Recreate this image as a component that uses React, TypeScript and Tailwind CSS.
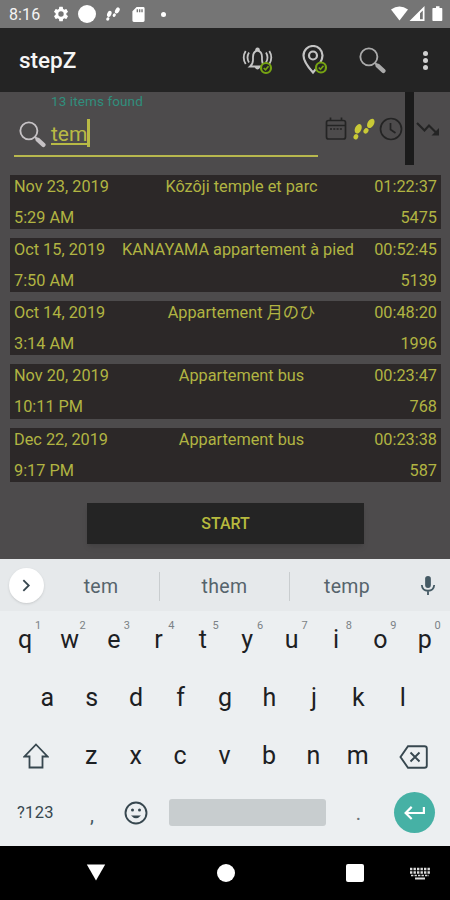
import { clsx } from "clsx";
import type { ReactNode } from "react";

type Walk = {
  date: string;
  time: string;
  title: string;
  duration: string;
  steps: number;
};

const WALKS: Walk[] = [
  { date: "Nov 23, 2019", time: "5:29 AM", title: "Kôzôji temple et parc", duration: "01:22:37", steps: 5475 },
  { date: "Oct 15, 2019", time: "7:50 AM", title: "KANAYAMA appartement à pied", duration: "00:52:45", steps: 5139 },
  { date: "Oct 14, 2019", time: "3:14 AM", title: "Appartement 月のひ", duration: "00:48:20", steps: 1996 },
  { date: "Nov 20, 2019", time: "10:11 PM", title: "Appartement bus", duration: "00:23:47", steps: 768 },
  { date: "Dec 22, 2019", time: "9:17 PM", title: "Appartement bus", duration: "00:23:38", steps: 587 },
];

const TOP_KEYS = "qwertyuiop".split("");
const MIDDLE_KEYS = "asdfghjkl".split("");
const BOTTOM_KEYS = "zxcvbnm".split("");

function SearchIcon({ className }: { className: string }) {
  return (
    <svg viewBox="0 0 26 26" className={className} fill="none" stroke="currentColor">
      <circle cx="9.5" cy="9.5" r="8.2" strokeWidth="1.8" />
      <path d="M15.5 15.5l3 3" strokeWidth="2" />
      <path d="M18 18l5.5 5" strokeWidth="4.2" strokeLinecap="round" />
    </svg>
  );
}

function FootstepsIcon({ className }: { className: string }) {
  return (
    <svg viewBox="0 0 22 22" className={className} fill="currentColor">
      <ellipse cx="5.2" cy="10.8" rx="3.2" ry="5" transform="rotate(24 5.2 10.8)" />
      <ellipse cx="2.9" cy="18.8" rx="2.3" ry="2.8" transform="rotate(24 2.9 18.8)" />
      <ellipse cx="17.8" cy="5.4" rx="3.2" ry="5.1" transform="rotate(30 17.8 5.4)" />
      <ellipse cx="13" cy="12.8" rx="2.3" ry="2.9" transform="rotate(36 13 12.8)" />
    </svg>
  );
}

function CheckBadge({ cx, cy }: { cx: number; cy: number }) {
  return (
    <g stroke="#76a312" fill="#242424">
      <circle cx={cx} cy={cy} r="5" strokeWidth="2.2" />
      <path d={`M${cx - 2.3} ${cy}l1.8 1.8 3-3.6`} strokeWidth="1.7" fill="none" />
    </g>
  );
}

function StatusBar() {
  return (
    <div className="flex h-7 items-center bg-[#757575] pl-[9px] pr-[7px] text-white">
      <span className="w-[43px] pt-[2px] text-[16px] tracking-[0.1px] text-[#f4f4f4]">8:16</span>
      <svg viewBox="0 0 24 24" className="size-[18px]" fill="currentColor">
        <path d="M19.14 12.94c.04-.3.06-.61.06-.94s-.02-.64-.07-.94l2.03-1.58a.49.49 0 0 0 .12-.61l-1.92-3.32a.49.49 0 0 0-.59-.22l-2.39.96a7 7 0 0 0-1.62-.94l-.36-2.54A.48.48 0 0 0 13.92 2.4h-3.84a.48.48 0 0 0-.47.41l-.36 2.54c-.59.24-1.13.57-1.62.94l-2.39-.96a.48.48 0 0 0-.59.22L2.74 8.87a.48.48 0 0 0 .12.61l2.03 1.58a7.5 7.5 0 0 0 0 1.88l-2.03 1.58a.49.49 0 0 0-.12.61l1.92 3.32c.12.22.37.29.59.22l2.39-.96c.5.38 1.03.7 1.62.94l.36 2.54c.05.24.24.41.48.41h3.84c.24 0 .44-.17.47-.41l.36-2.54a7 7 0 0 0 1.62-.94l2.39.96c.22.08.47 0 .59-.22l1.92-3.32a.48.48 0 0 0-.12-.61zM12 15.6a3.6 3.6 0 1 1 0-7.2 3.6 3.6 0 0 1 0 7.2z" />
      </svg>
      <span className="ml-[8px] size-[18px] rounded-full bg-white" />
      <FootstepsIcon className="ml-[10px] size-[14px]" />
      <svg viewBox="0 0 13 16" className="ml-[12px] h-[15px] w-[13px]" fill="currentColor">
        <path fillRule="evenodd" d="M4.5 0H11.5Q13 0 13 1.5V14.5Q13 16 11.5 16H1.5Q0 16 0 14.5V4.5zM4.5 2.5V5.5H6V2.5zM7 2.5V5.5H8.5V2.5zM9.5 2.5V5.5H11V2.5z" />
      </svg>
      <span className="ml-4 size-[5px] rounded-full bg-white" />
      <svg viewBox="0 0 52 16" className="ml-auto h-4 w-[52px]" fill="currentColor">
        <path d="M0 3.5Q8.5-2.3 17 3.5L8.5 14.5z" />
        <path fillRule="evenodd" d="M33.5 0V15H18.500zM31.8 4.500V13.3H29V7.300z" />
        <path d="M43 2h2V.3h3.5V2h2q.8 0 .8.800V14.200q0 .8-.8.800H42.200q-.8 0-.8-.8V2.800q0-.8.800-.8z" />
      </svg>
    </div>
  );
}

function AppBar() {
  return (
    <header className="flex h-16 items-center bg-[#242424] pl-[19px] text-[#c4c4c4]">
      <h1 className="flex-1 pt-[2px] text-[22.5px] font-medium text-[#f5f5f5]">stepZ</h1>
      <svg viewBox="0 0 32 30" className="mr-[28px] h-[30px] w-8" fill="none" stroke="currentColor" strokeWidth="1.8">
        <path d="M8 21.5q3-2.500 3-6.500v-3q0-5.500 4.500-6.500 4.500 1 4.500 6.500v3q0 4 3 6.500zM14 5.500q0-2 1.500-2t1.500 2M13.500 22q2 3 4 0" />
        <path d="M7 7.500q-3 5 0 10M24 7.500q3 5 0 10M3.700 6q-4 6.500 0 13M27.300 6q4 6.500 0 13" />
        <CheckBadge cx={24} cy={23} />
      </svg>
      <svg viewBox="0 0 26 30" className="mr-[31px] h-[30px] w-[26px]" fill="none" stroke="currentColor" strokeWidth="2.2">
        <path d="M11 27.5Q1.500 17 1.500 10.500a9.500 9.500 0 0 1 19 0Q20.500 17 11 27.500z" />
        <circle cx="11" cy="10.5" r="4" />
        <CheckBadge cx={19} cy={22.5} />
      </svg>
      <SearchIcon className="mr-[37px] size-[27px] text-[#aaa]" />
      <span className="mr-[22px] flex flex-col gap-[2px]">
        <i className="size-[5px] rounded-full bg-[#d0d0d0]" />
        <i className="size-[5px] rounded-full bg-[#d0d0d0]" />
        <i className="size-[5px] rounded-full bg-[#d0d0d0]" />
      </span>
    </header>
  );
}

function SearchRow() {
  return (
    <section className="flex h-[82px] shrink-0 text-[#242424]">
      <div className="ml-[14px] w-[304px]">
        <p className="h-[18px] pl-[37px] text-[13.5px] leading-[18px] tracking-[0.1px] text-[#308f7d]">13 items found</p>
        <div className="flex h-[47px] items-center border-b-2 border-[#b8b84e] pl-[5px]">
          <SearchIcon className="mt-[3px] size-[27px] text-[#c6c2c5]" />
          <span className="mt-[3px] ml-[5px] text-[21px] leading-7 text-[#b9ba45] underline decoration-[1.5px] underline-offset-2">tem</span>
          <span className="h-7 w-[3px] bg-[#b9ba45]" />
        </div>
      </div>
      <div className="ml-[7px] flex h-[73px] items-center">
        <svg viewBox="0 0 22 24" className="h-6 w-[22px]" fill="none" stroke="currentColor" strokeWidth="1.7">
          <rect x="1.5" y="3.5" width="19" height="18.5" rx="2" />
          <path d="M2 8.5h18M5.5 3.5V.5M16.5 3.5V.5" />
          <path d="M5 12h12" strokeDasharray="2 1.3" />
        </svg>
        <FootstepsIcon className="ml-[6px] size-[22px] text-[#c9c936]" />
        <svg viewBox="0 0 24 24" className="ml-1 size-6" fill="none" stroke="currentColor" strokeWidth="1.7">
          <circle cx="12" cy="12" r="10.5" />
          <path d="M11.5 6v6.500l5 3.500" />
        </svg>
        <span className="ml-[2px] h-full w-[9px] bg-[#1b1b1b]" />
        <svg viewBox="0 0 24 16" className="ml-[2px] h-4 w-6" fill="none" stroke="currentColor" strokeWidth="2.2">
          <path d="M1 2l7.500 7.500 4.500-5 8 8" />
          <path d="M23 7v7.500h-7.500z" fill="currentColor" stroke="none" />
        </svg>
      </div>
    </section>
  );
}

function WalkCard({ walk }: { walk: Walk }) {
  // Long titles sit closer to the date column
  const isLong = walk.title.length > 24;

  return (
    <li className="h-[54.3px] bg-[#2c2828] px-1 text-[16.3px] leading-[31px] text-[#b1b442]">
      <div className="-mt-1 flex h-[31px] justify-between">
        <span className="w-[98px] whitespace-nowrap">{walk.date}</span>
        <span className={clsx("flex-1 text-center whitespace-nowrap", isLong && "pr-[7px]")}>{walk.title}</span>
        <span className="w-[66px] text-right">{walk.duration}</span>
      </div>
      <div className="flex h-[26px] justify-between">
        <span>{walk.time}</span>
        <span>{walk.steps}</span>
      </div>
    </li>
  );
}

function Suggestion({ children }: { children: ReactNode }) {
  return <span className="text-center text-[19.5px] tracking-[0.3px]">{children}</span>;
}

function Keyboard() {
  return (
    <section className="h-[287px] bg-[#eceff1] text-[25px] text-[#1c2023]">
      <div className="flex h-[52px] items-center bg-[#e6e9eb] text-[#56646c]">
        <span className="ml-[9px] flex size-[35px] items-center justify-center rounded-full bg-white shadow-sm">
          <svg viewBox="0 0 10 14" className="h-[13px] w-[9px]" fill="none" stroke="#37474f" strokeWidth="2">
            <path d="M1.5 1l6 6-6 6" />
          </svg>
        </span>
        <div className="ml-[-1px] grid h-[27px] w-[361px] grid-cols-[117px_130px_114px] items-center divide-x divide-[#c9cdcf]">
          <Suggestion>tem</Suggestion>
          <Suggestion>them</Suggestion>
          <Suggestion>temp</Suggestion>
        </div>
        <svg viewBox="0 0 16 22" className="ml-4 h-[21px] w-4" fill="#455a64">
          <rect x="5" y="1" width="6" height="12.5" rx="3" />
          <path d="M1.5 10.5q.5 6 6.500 6t6.500-6M8 16v5" fill="none" stroke="#455a64" strokeWidth="1.9" />
        </svg>
      </div>
      <div className="grid h-[58px] grid-cols-10 px-[3px]">
        {TOP_KEYS.map((key, i) => (
          <span key={key} className="relative text-center leading-[58px]">
            {key}
            <sup className="absolute top-[8px] left-[32px] text-[11px] leading-[14px] text-[#7b8286]">{(i + 1) % 10}</sup>
          </span>
        ))}
      </div>
      <div className="grid h-[58px] grid-cols-9 px-[25px] text-center leading-[57px]">
        {MIDDLE_KEYS.map((key) => (
          <span key={key}>{key}</span>
        ))}
      </div>
      <div className="flex h-[58px] items-center">
        <svg viewBox="0 0 26 26" className="ml-[23px] size-[26px]" fill="none" stroke="#37474f" strokeWidth="1.8">
          <path d="M13 1.5l11.500 12h-5V24.500h-13V13.500h-5z" />
        </svg>
        <div className="ml-5 grid w-[311px] grid-cols-7 text-center leading-[56px]">
          {BOTTOM_KEYS.map((key) => (
            <span key={key}>{key}</span>
          ))}
        </div>
        <svg viewBox="0 0 29 24" className="mt-[2px] ml-[19px] h-6 w-[29px]" fill="none" stroke="#37474f" strokeWidth="1.9">
          <path d="M9 1.2H25.500q2.300 0 2.300 2.300V20.500q0 2.300-2.300 2.300H9L1.500 12z" />
          <path d="M11.5 7.500l9 9m0-9l-9 9" />
        </svg>
      </div>
      <div className="flex h-[55px] items-center">
        <span className="ml-[17px] w-[55px] pt-[2px] text-[16.5px] tracking-[0.3px] text-[#37474f]">?123</span>
        <span className="w-10 pt-1 text-center text-[20px] text-[#455a64]">,</span>
        <svg viewBox="0 0 24 24" className="ml-3 size-6" fill="none" stroke="#37474f" strokeWidth="1.9">
          <circle cx="12" cy="12" r="10.5" />
          <path d="M7 14.5q5 5.500 10 0z" fill="#37474f" stroke="none" />
          <circle cx="8.5" cy="9" r="1.5" fill="#37474f" stroke="none" />
          <circle cx="15.5" cy="9" r="1.5" fill="#37474f" stroke="none" />
        </svg>
        <span className="ml-[21px] h-[27px] w-[157px] rounded-[3px] bg-[#c8cdcf]" />
        <span className="w-[65px] pt-px text-center text-[20px] text-[#6b7377]">.</span>
        <span className="ml-[3px] flex size-[41px] items-center justify-center rounded-full bg-[#46b1a5]">
          <svg viewBox="0 0 24 16" className="h-[15px] w-[23px]" fill="none" stroke="white" strokeWidth="2.3">
            <path d="M22 2v6.500H2.500M9 2L2.500 8.500 9 15" />
          </svg>
        </span>
      </div>
    </section>
  );
}

function NavBar() {
  return (
    <nav className="flex h-[54px] items-center bg-black text-white">
      <svg viewBox="0 0 20 17" className="ml-[86px] -mt-[2px] h-[17px] w-5" fill="currentColor">
        <path d="M.8.5H19.200L10 16.500z" />
      </svg>
      <span className="ml-[111px] size-[18px] rounded-full bg-white" />
      <span className="ml-[111px] size-[18px] rounded-[2px] bg-white" />
      <svg viewBox="0 0 20 13" className="ml-[46px] h-[13px] w-5" fill="none" stroke="#ddd">
        <path d="M0 2h20M0 5.5h20" strokeWidth="2.3" strokeDasharray="2.4 1.1" />
        <path d="M1 8.5h18" strokeWidth="1.7" strokeDasharray="2.4 1.1" />
        <path d="M5 11.5h10" strokeWidth="2" />
      </svg>
    </nav>
  );
}

export default function App() {
  return (
    <div className="flex h-[900px] w-[450px] flex-col overflow-hidden bg-[#4d4b4c] font-[Roboto,'Noto_Sans_CJK_JP',sans-serif]">
      <StatusBar />
      <AppBar />
      <main className="flex h-[467px] flex-col">
        <SearchRow />
        <ul className="ml-[10px] flex w-[431px] flex-col gap-[9px] pt-[0.5px]">
          {WALKS.map((walk) => (
            <WalkCard key={walk.date} walk={walk} />
          ))}
        </ul>
        <button type="button" className="mt-[21px] ml-[87px] h-[41px] w-[277px] bg-[#242424] pt-[2px] text-[16px] font-medium text-[#b7ba3e] shadow-md">
          START
        </button>
      </main>
      <Keyboard />
      <NavBar />
    </div>
  );
}
